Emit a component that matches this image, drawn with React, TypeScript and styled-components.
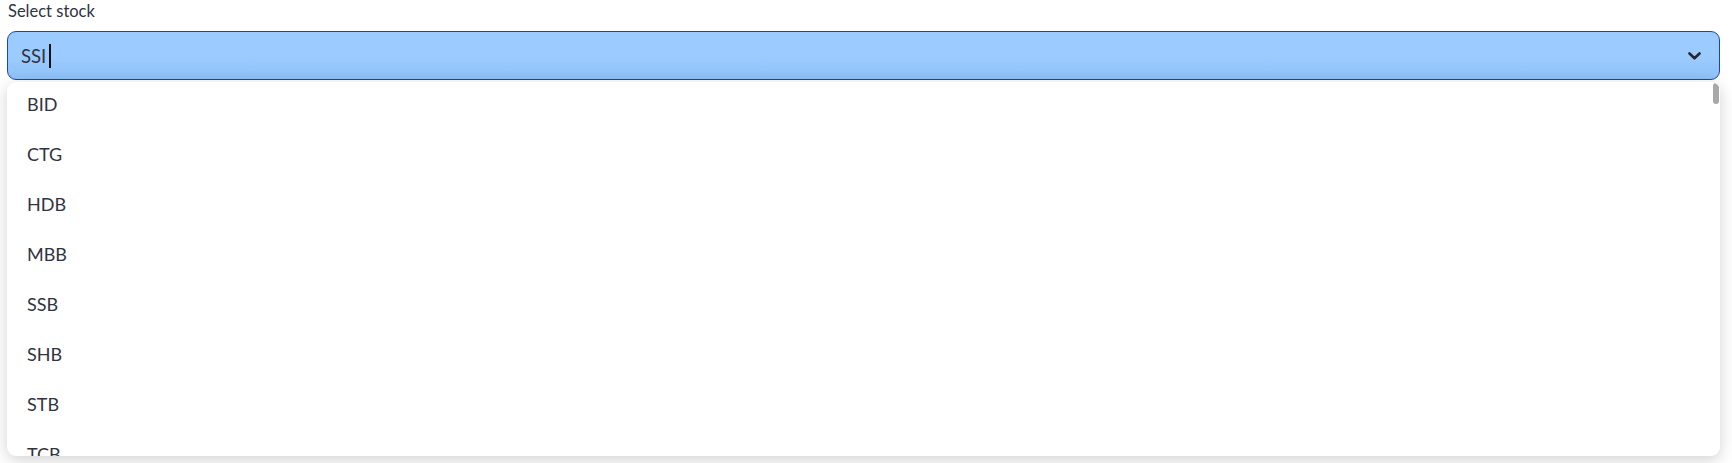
import React from "react";
import styled, { createGlobalStyle } from "styled-components";

const Global = createGlobalStyle`
  html, body { margin: 0; padding: 0; background: #ffffff; }
  body { font-family: "Source Sans Pro", Lato, "Noto Sans", sans-serif; color: #31333f; }
`;

const Page = styled.div`
  padding: 0 12px 0 7px;
  box-sizing: border-box;
  width: 1732px;
  height: 463px;
  overflow: hidden;
`;

const Label = styled.div`
  font-size: 16.5px;
  line-height: 22px;
  padding: 0 0 0 1px;
  margin-bottom: 9px;
  color: #31333f;
`;

const Control = styled.div`
  height: 49px;
  box-sizing: border-box;
  border: 1px solid #1246c8;
  border-radius: 9px;
  background: linear-gradient(to bottom, #9bcbff 0%, #9bcbff 55%, #8ec1f7 100%);
  display: flex;
  align-items: center;
  padding: 0 18px 0 13px;
`;

const Value = styled.div`
  flex: 1;
  display: flex;
  align-items: center;
  font-size: 18.5px;
  color: #31333f;
`;

const Caret = styled.span`
  display: inline-block;
  width: 2px;
  height: 24px;
  background: #111;
  margin-left: 3px;
`;

const Chevron = () => (
  <svg width="13" height="8" viewBox="0 0 13 8">
    <polyline points="1.5,1.5 6.5,6.3 11.5,1.5" fill="none" stroke="#262730" strokeWidth="2.6" strokeLinecap="round" strokeLinejoin="round" />
  </svg>
);

const Menu = styled.div`
  position: relative;
  margin-top: 2px;
  height: 374px;
  border-radius: 9px;
  background: #ffffff;
  box-shadow: rgba(0, 0, 0, 0.18) 0px 4px 16px;
  overflow: hidden;
`;

const Item = styled.div`
  height: 50px;
  box-sizing: border-box;
  display: flex;
  align-items: center;
  padding: 0 0 7px 20px;
  font-size: 18px;
  color: #31333f;
`;

const Thumb = styled.div`
  position: absolute;
  top: 1px;
  right: 1px;
  width: 6px;
  height: 21px;
  border-radius: 3px;
  background: #a8a8a8;
`;

const options = ["BID", "CTG", "HDB", "MBB", "SSB", "SHB", "STB", "TCB", "TPB"];

export default function App() {
  return (
    <>
      <Global />
      <Page>
        <Label>Select stock</Label>
        <Control>
          <Value>
            SSI
            <Caret />
          </Value>
          <Chevron />
        </Control>
        <Menu>
          {options.map((o) => (
            <Item key={o}>{o}</Item>
          ))}
          <Thumb />
        </Menu>
      </Page>
    </>
  );
}
